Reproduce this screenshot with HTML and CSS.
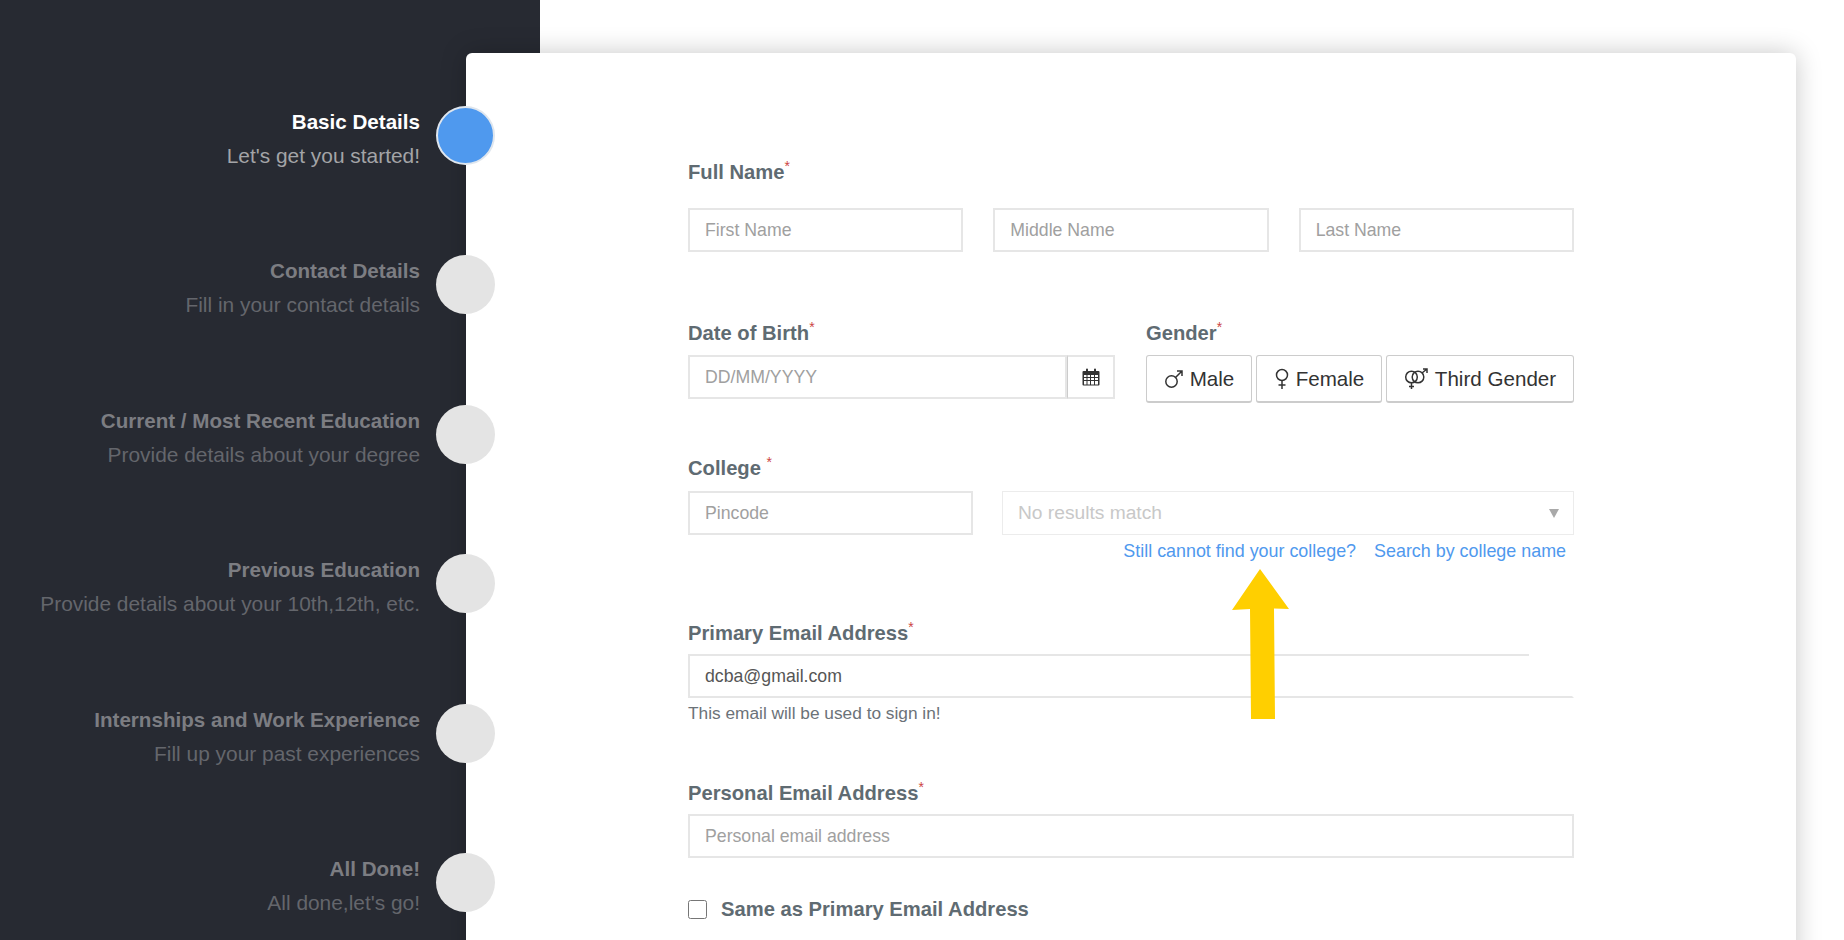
FILE: index.html
```html
<!DOCTYPE html>
<html lang="en">
<head>
    <meta charset="UTF-8">
    <meta name="viewport" content="width=device-width, initial-scale=1.0">
    <title>Basic Details</title>
    <link rel="stylesheet" href="styles.css">
</head>
<body>
<div class="page">

    <ul class="steps">
        <li class="step active">
            <div class="step-text"><h4>Basic Details</h4><p>Let's get you started!</p></div>
            <span class="dot"></span>
        </li>
        <li class="step">
            <div class="step-text"><h4>Contact Details</h4><p>Fill in your contact details</p></div>
            <span class="dot"></span>
        </li>
        <li class="step">
            <div class="step-text"><h4>Current / Most Recent Education</h4><p>Provide details about your degree</p></div>
            <span class="dot"></span>
        </li>
        <li class="step">
            <div class="step-text"><h4>Previous Education</h4><p>Provide details about your 10th,12th, etc.</p></div>
            <span class="dot"></span>
        </li>
        <li class="step">
            <div class="step-text"><h4>Internships and Work Experience</h4><p>Fill up your past experiences</p></div>
            <span class="dot"></span>
        </li>
        <li class="step">
            <div class="step-text"><h4>All Done!</h4><p>All done,let's go!</p></div>
            <span class="dot"></span>
        </li>
    </ul>

    <div class="card">
        <form class="form">

            <div class="group group-name">
                <label class="label">Full Name<sup>*</sup></label>
                <div class="row-name">
                    <input type="text" placeholder="First Name">
                    <input type="text" placeholder="Middle Name">
                    <input type="text" placeholder="Last Name">
                </div>
            </div>

            <div class="row-dob">
                <div>
                    <label class="label">Date of Birth<sup>*</sup></label>
                    <div class="date-box">
                        <input type="text" placeholder="DD/MM/YYYY">
                        <span class="addon">
                            <svg width="18" height="18" viewBox="0 0 18 18">
                                <path fill="#333" fill-rule="evenodd" d="M1.5 3H4V1.5a1 1 0 0 1 2 0V3h6V1.500a1 1 0 0 1 2 0V3h2.500a1 1 0 0 1 1 1v12.500a1 1 0 0 1-1 1h-15a1 1 0 0 1-1-1V4a1 1 0 0 1 1-1zM2 7v2h2.500V7zm3.500 0v2H8V7zM9 7v2h3V7zm4 0v2h3V7zM2 10v2h2.500v-2zm3.500 0v2H8v-2zM9 10v2h3v-2zm4 0v2h3v-2zM2 13v3.500h2.500V13zm3.500 0v3.500H8V13zM9 13v3.500h3V13zm4 0v3.500h3V13z"/>
                            </svg>
                        </span>
                    </div>
                </div>
                <div>
                    <label class="label">Gender<sup>*</sup></label>
                    <div class="gender-btns">
                        <button type="button" class="btn-male">
                            <svg width="20" height="20" viewBox="0 0 20 20" fill="none" stroke="#333" stroke-width="1.500">
                                <circle cx="7.500" cy="12.500" r="5.700"/><path d="M11.500 8.500L18 2M13 2h5v5"/>
                            </svg>
                            Male
                        </button>
                        <button type="button" class="btn-female">
                            <svg width="16" height="22" viewBox="0 0 16 22" fill="none" stroke="#333" stroke-width="1.500">
                                <circle cx="8" cy="7" r="5.500"/><path d="M8 12.500V21M4.500 17h7"/>
                            </svg>
                            Female
                        </button>
                        <button type="button" class="btn-third">
                            <svg width="25" height="22" viewBox="0 0 25 22" fill="none" stroke="#333" stroke-width="1.500">
                                <circle cx="7.500" cy="9" r="5.800"/><circle cx="14" cy="9" r="5.800"/><path d="M7.500 15v6M5 18.500h5M18 5l5-4M19 1h4v4"/>
                            </svg>
                            Third Gender
                        </button>
                    </div>
                </div>
            </div>

            <div class="group group-college">
                <label class="label">College <sup>*</sup></label>
                <div class="row-college">
                    <input type="text" placeholder="Pincode">
                    <div class="select-box">No results match<span class="caret"></span></div>
                </div>
                <div class="college-links">
                    <a href="#">Still cannot find your college?</a>
                    <a href="#">Search by college name</a>
                </div>
            </div>

            <div class="group group-primary">
                <label class="label">Primary Email Address<sup>*</sup></label>
                <div class="email-wrap"><input type="text" value="dcba@gmail.com"></div>
                <p class="help">This email will be used to sign in!</p>
            </div>

            <div class="group group-personal">
                <label class="label">Personal Email Address<sup>*</sup></label>
                <input type="text" placeholder="Personal email address">
            </div>

            <label class="check-row"><input type="checkbox"><span>Same as Primary Email Address</span></label>
        </form>
    </div>

    <svg class="arrow" width="58" height="152" viewBox="0 0 58 152">
        <path fill="#ffcf00" d="M28 0L57 40L42 39.500L43 150L19 150L18 40L0 41Z"/>
    </svg>

</div>
</body>
</html>
```

FILE: styles.css
```css
* {
    box-sizing: border-box;
}
html, body {
    margin: 0;
    height: 100%;
    overflow: hidden;
}
body {
    font-family: "Liberation Sans", Arial, sans-serif;
    background-color: #fff;
}
.page {
    position: relative;
    display: grid;
    grid-template-columns: 466px 1330px;
    height: 940px;
    overflow: hidden;
    padding-top: 53px;
    background: linear-gradient(to right, #272a32 540px, #fff 540px);
}

/* left steps */
.steps {
    list-style: none;
    margin: 0;
    padding: 53px 0 0;
    position: relative;
    z-index: 2;
}
.step {
    display: flex;
    justify-content: flex-end;
    align-items: center;
    height: 59px;
    margin-bottom: 90.400px;
    margin-right: -29px;
}
.step-text {
    text-align: right;
    margin: 7px 16px 0 0;
    color: #fff;
}
.step h4 {
    margin: 0;
    font-size: 20.600px;
    line-height: 24px;
    color: #7c7d82;
}
.step p {
    margin: 10px 0 0;
    font-size: 20.900px;
    line-height: 24px;
    color: #64666c;
}
.dot {
    flex: none;
    width: 59px;
    height: 59px;
    border-radius: 50%;
    background-color: #e4e4e4;
}
.step.active h4 {
    color: #fff;
}
.step.active p {
    color: #a3a4a7;
}
.step.active .dot {
    background-color: #4f99ee;
    border: 2px solid #dfe6ee;
}

/* card */
.card {
    background-color: #fff;
    border-radius: 6px 6px 0 0;
    box-shadow: 0 0 26px rgba(0, 0, 0, 0.22);
    padding: 107px 222px 0;
    position: relative;
    z-index: 1;
}
.label {
    display: block;
    font-size: 20.200px;
    font-weight: bold;
    line-height: 24px;
    color: #5f6b72;
}
.label sup {
    color: #cc4444;
    font-size: 14px;
    line-height: 0;
    font-weight: normal;
}
input[type="text"] {
    display: block;
    width: 100%;
    height: 44px;
    padding: 0 15px;
    border: 2px solid #e6e6e6;
    border-radius: 0;
    font-family: inherit;
    font-size: 17.700px;
    color: #555;
    outline: none;
    background: #fff;
}
input::placeholder {
    color: #a0a0a0;
    opacity: 1;
}
.group-name .row-name {
    display: grid;
    grid-template-columns: repeat(3, 1fr);
    gap: 30px;
    margin-top: 24px;
}
.row-dob {
    display: grid;
    grid-template-columns: 427px 428px;
    gap: 31px;
    margin-top: 69px;
}
.row-dob .label {
    margin-bottom: 10px;
}
.date-box {
    display: flex;
}
.addon {
    flex: none;
    display: flex;
    align-items: center;
    justify-content: center;
    width: 48px;
    height: 44px;
    border: 2px solid #e6e6e6;
    border-left: 1px solid #ccc;
}
.gender-btns {
    display: flex;
    gap: 4px;
}
.gender-btns button {
    display: flex;
    align-items: center;
    justify-content: center;
    gap: 6px;
    height: 48px;
    padding: 0;
    font-family: inherit;
    font-size: 20.600px;
    color: #333;
    background: #fff;
    border: 1px solid #ccc;
    border-bottom-width: 2px;
    border-radius: 3px;
}
.btn-male {
    width: 106px;
}
.btn-female {
    width: 126px;
}
.btn-third {
    width: 188px;
}
.group-college {
    margin-top: 53px;
}
.row-college {
    display: grid;
    grid-template-columns: 285px 572px;
    gap: 29px;
    margin-top: 11px;
}
.select-box {
    display: flex;
    align-items: center;
    justify-content: space-between;
    height: 44px;
    padding: 0 14px 0 15px;
    border: 1px solid #ececec;
    font-size: 19.200px;
    color: #c8c8c8;
}
.caret {
    width: 0;
    height: 0;
    border-left: 5px solid transparent;
    border-right: 5px solid transparent;
    border-top: 9px solid #a9a9a9;
}
.college-links {
    display: flex;
    justify-content: flex-end;
    gap: 18px;
    padding-right: 8px;
    margin-top: 6px;
    font-size: 17.900px;
    line-height: 20px;
}
.college-links a {
    color: #4f99ee;
    text-decoration: none;
}
.group-primary {
    margin-top: 60px;
}
.email-wrap {
    margin-top: 9px;
    background: linear-gradient(#e6e6e6, #e6e6e6) top left / 841px 2px no-repeat;
}
.email-wrap input[type="text"] {
    background: transparent;
    border-top-color: transparent;
    border-right-color: transparent;
}
.help {
    margin: 6px 0 0;
    font-size: 17.300px;
    line-height: 18px;
    color: #6b7278;
}
.group-personal {
    margin-top: 59px;
}
.group-personal .label {
    margin-bottom: 9px;
}
.check-row {
    display: flex;
    align-items: center;
    gap: 14px;
    margin-top: 40px;
    font-size: 20.200px;
    font-weight: bold;
    color: #5f6b72;
}
.check-row input {
    width: 19px;
    height: 19px;
    margin: 0;
}

/* annotation arrow over the form */
.arrow {
    position: absolute;
    left: 1232px;
    top: 569px;
    z-index: 3;
}
```
